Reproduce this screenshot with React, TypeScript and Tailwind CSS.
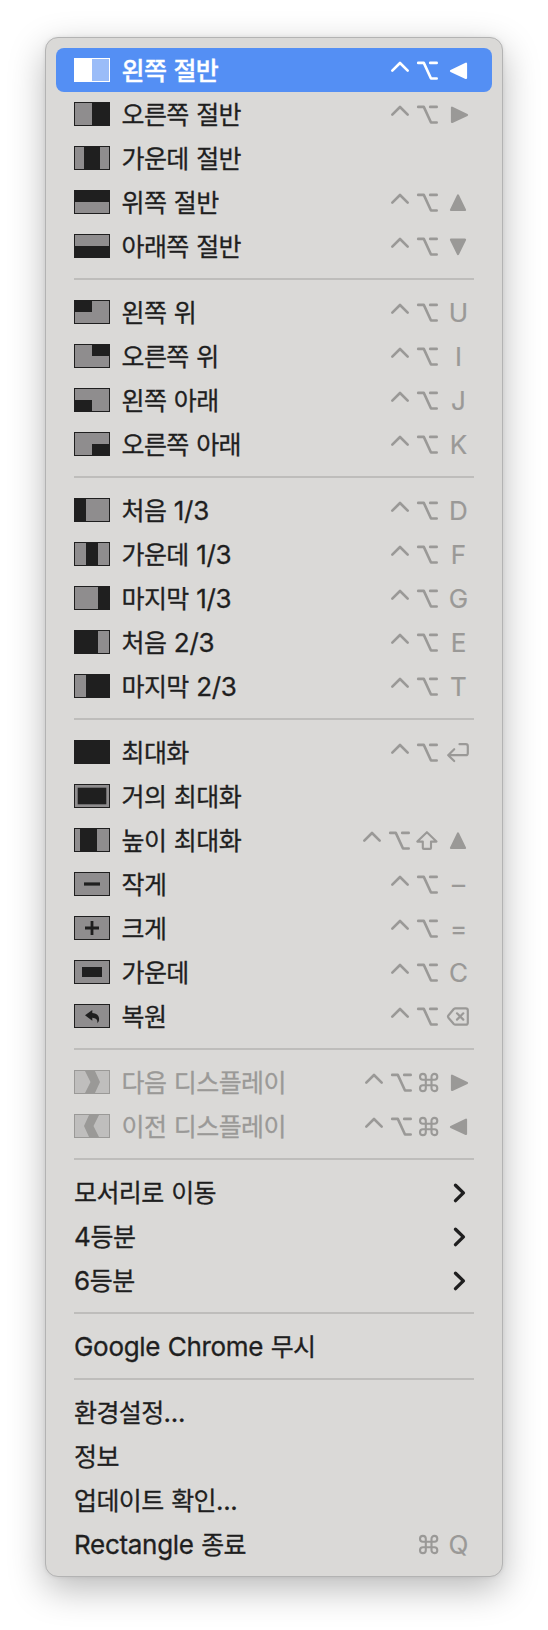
import { ReactNode } from "react"
import clsx from "clsx"

type Modifier = "ctrl" | "opt" | "shift" | "cmd"

interface Item {
    label: string
    icon?: ReactNode
    mods?: Modifier[]
    keyName?: string
    active?: boolean
    disabled?: boolean
    submenu?: boolean
}

const CO: Modifier[] = ["ctrl", "opt"]

// Filled part of a window thumbnail
const Area = ({ x, y, w, h }: { x: number; y: number; w: number; h: number }) => (
    <rect x={x} y={y} width={w} height={h} fill="currentColor" />
)

const groups: Item[][] = [
    [
        { label: "왼쪽 절반", icon: <Area x={0} y={0} w={18} h={24} />, mods: CO, keyName: "left", active: true },
        { label: "오른쪽 절반", icon: <Area x={18} y={0} w={18} h={24} />, mods: CO, keyName: "right" },
        { label: "가운데 절반", icon: <Area x={10} y={0} w={16} h={24} /> },
        { label: "위쪽 절반", icon: <Area x={0} y={0} w={36} h={12} />, mods: CO, keyName: "up" },
        { label: "아래쪽 절반", icon: <Area x={0} y={12} w={36} h={12} />, mods: CO, keyName: "down" },
    ],
    [
        { label: "왼쪽 위", icon: <Area x={0} y={0} w={18} h={12} />, mods: CO, keyName: "U" },
        { label: "오른쪽 위", icon: <Area x={18} y={0} w={18} h={12} />, mods: CO, keyName: "I" },
        { label: "왼쪽 아래", icon: <Area x={0} y={12} w={18} h={12} />, mods: CO, keyName: "J" },
        { label: "오른쪽 아래", icon: <Area x={18} y={12} w={18} h={12} />, mods: CO, keyName: "K" },
    ],
    [
        { label: "처음 1/3", icon: <Area x={0} y={0} w={12} h={24} />, mods: CO, keyName: "D" },
        { label: "가운데 1/3", icon: <Area x={12} y={0} w={12} h={24} />, mods: CO, keyName: "F" },
        { label: "마지막 1/3", icon: <Area x={24} y={0} w={12} h={24} />, mods: CO, keyName: "G" },
        { label: "처음 2/3", icon: <Area x={0} y={0} w={24} h={24} />, mods: CO, keyName: "E" },
        { label: "마지막 2/3", icon: <Area x={12} y={0} w={24} h={24} />, mods: CO, keyName: "T" },
    ],
    [
        { label: "최대화", icon: <Area x={0} y={0} w={36} h={24} />, mods: CO, keyName: "return" },
        { label: "거의 최대화", icon: <Area x={3.7} y={3.7} w={28.6} h={16.6} /> },
        { label: "높이 최대화", icon: <Area x={6} y={0} w={17} h={24} />, mods: ["ctrl", "opt", "shift"], keyName: "up" },
        { label: "작게", icon: <Area x={10} y={10.4} w={16} h={3.2} />, mods: CO, keyName: "–" },
        {
            label: "크게",
            icon: <path d="M11 12h14M18 5v14" stroke="currentColor" strokeWidth="2.8" />,
            mods: CO,
            keyName: "=",
        },
        { label: "가운데", icon: <Area x={8} y={7} w={20} h={10} />, mods: CO, keyName: "C" },
        {
            label: "복원",
            icon: <path d="M11 11.3L18.3 6v3.1c4.6.3 6.8 2.700 6.800 6 0 1.900-.6 3.100-1.800 4.200.5-3.300-.9-5.300-5-5.500v2.900z" fill="currentColor" />,
            mods: CO,
            keyName: "delete",
        },
    ],
    [
        {
            label: "다음 디스플레이",
            icon: <path d="M10.500 0h10L26 12l-5.500 12h-10l6-12z" fill="currentColor" />,
            mods: ["ctrl", "opt", "cmd"],
            keyName: "right",
            disabled: true,
        },
        {
            label: "이전 디스플레이",
            icon: <path d="M25.500 0h-10L10 12l5.500 12h10l-6-12z" fill="currentColor" />,
            mods: ["ctrl", "opt", "cmd"],
            keyName: "left",
            disabled: true,
        },
    ],
    [
        { label: "모서리로 이동", submenu: true },
        { label: "4등분", submenu: true },
        { label: "6등분", submenu: true },
    ],
    [{ label: "Google Chrome 무시" }],
    [
        { label: "환경설정..." },
        { label: "정보" },
        { label: "업데이트 확인..." },
        { label: "Rectangle 종료", mods: ["cmd"], keyName: "Q" },
    ],
]

const modifierShapes: Record<Modifier, { width: number; d: string }> = {
    ctrl: { width: 26, d: "M7.300 22.700L15 15l7.700 7.700" },
    opt: { width: 28, d: "M7.200 14.900h5.600l7.200 15.600h5.700M19.200 14.900h6.500" },
    shift: { width: 28, d: "M15.900 14.200L6.300 23.600h5.500v6.300q0 1 1 1h6.200q1 0 1-1v-6.300h5.500z" },
    cmd: {
        width: 26,
        d: "M12.800 16.800v11.400a2.900 2.900 0 1 1-2.900-2.900h11.500a2.900 2.900 0 1 1-2.900 2.900v-11.400a2.900 2.900 0 1 1 2.900 2.900H9.900a2.900 2.900 0 1 1 2.900-2.900z",
    },
}

const ModifierGlyph = ({ name }: { name: Modifier }) => {
    const { width, d } = modifierShapes[name]
    return (
        <svg
            width={width}
            height={44}
            viewBox={`0 0 ${width} 44`}
            fill="none"
            stroke="currentColor"
            strokeWidth={name === "cmd" || name === "shift" ? 2.1 : 2.6}
            strokeLinecap="round"
            strokeLinejoin="round"
        >
            <path d={d} />
        </svg>
    )
}

const keyShapes: Record<string, ReactNode> = {
    left: <path d="M12 22.900l15-7.200v14.300z" fill="currentColor" />,
    right: <path d="M28 22.900l-15-7.200v14.300z" fill="currentColor" />,
    up: <path d="M19 15.500l7 14.500H12z" fill="currentColor" />,
    down: <path d="M19 30l7-14.300H12z" fill="currentColor" />,
    return: <path d="M20.500 14.200h6.300q2 0 2 2v7q0 2-2 2H9.200M15.200 19.200l-6 6 6 5.800" />,
    delete: <path d="M16.500 14.300h10.300q2 0 2 2v12.400q0 2-2 2H16.500q-1 0-1.700-.7L9.600 24q-1.200-1.400 0-2.800L14.800 15q.7-.7 1.700-.7zM18 19.300l6.300 6.300M24.300 19.300L18 25.600" />,
}

const KeyGlyph = ({ name }: { name: string }) => {
    if (!keyShapes[name]) {
        return <span className="w-[39px] pt-px text-center text-[26px] leading-[44px] [-webkit-text-stroke:0.2px]">{name}</span>
    }
    return (
        <svg
            width={39}
            height={44}
            viewBox="0 0 39 44"
            fill="none"
            stroke="currentColor"
            strokeWidth={2.200}
            strokeLinecap="round"
            strokeLinejoin="round"
        >
            {keyShapes[name]}
        </svg>
    )
}

// Hangul and Latin need different sizes and tracking to sit evenly together
const Label = ({ text }: { text: string }) => (
    <span className="flex-1 whitespace-pre pt-0.5 text-[26px] leading-[44px] tracking-[-0.3px] [word-spacing:0.5px] [-webkit-text-stroke:0.3px]">
        {text.split(/([가-힣]+)/).filter(Boolean).map((run, i) =>
            /[가-힣]/.test(run) ? (
                <span key={i} className="font-['Noto_Sans_CJK_KR',sans-serif] text-[25px] leading-none tracking-[-0.6px]">{run}</span>
            ) : (
                <span key={i}>{run}</span>
            )
        )}
    </span>
)

const MenuRow = ({ item }: { item: Item }) => {
    const { label, icon, mods, keyName, active, disabled, submenu } = item

    return (
        <div
            className={clsx(
                "flex h-11 items-center rounded-lg pl-[18px] pr-[14px]",
                active && "bg-[#548ff4] font-medium text-white",
                disabled && "text-[#9a9997]"
            )}
        >
            {icon && (
                <svg width={36} height={24} viewBox="0 0 36 24" className="mr-[11.5px] shrink-0">
                    <rect width={36} height={24} className={active ? "fill-[#9abcf8]" : disabled ? "fill-[#bfbebd]" : "fill-[#8f8d8e]"} />
                    {icon}
                    <rect x={0.5} y={0.5} width={35} height={23} fill="none" stroke="currentColor" />
                </svg>
            )}
            <Label text={label} />
            <div className={clsx("flex h-11 items-center font-normal", !active && !submenu && "text-[#9a9997]")}>
                {mods?.map((mod) => <ModifierGlyph key={mod} name={mod} />)}
                {keyName && <KeyGlyph name={keyName} />}
                {submenu && (
                    <svg width={39} height={44} viewBox="0 0 39 44" fill="none" stroke="currentColor" strokeWidth={3.400} strokeLinecap="round" strokeLinejoin="round">
                        <path d="M16.500 15.200l7.900 7.700-7.900 7.700" />
                    </svg>
                )}
            </div>
        </div>
    )
}

const App = () => {
    return (
        <div className="h-[1630px] w-[548px] overflow-hidden bg-white pl-[45px] pt-[37px] font-['Inter','Noto_Sans_CJK_KR',sans-serif] text-[#1f1f1f]">
            <div className="w-[458px] rounded-[13px] border border-[#b3b3b3] bg-[#dad9d7] p-[10px] shadow-[0_12px_36px_rgba(0,0,0,0.28),0_0_4px_rgba(0,0,0,0.08)]">
                {groups.map((items, i) => (
                    <div key={i}>
                        {i > 0 && <div className="my-[10px] ml-[18px] mr-[18px] h-0.5 bg-[#bebdbb]" />}
                        {items.map((item) => <MenuRow key={item.label} item={item} />)}
                    </div>
                ))}
            </div>
        </div>
    )
}

export default App
